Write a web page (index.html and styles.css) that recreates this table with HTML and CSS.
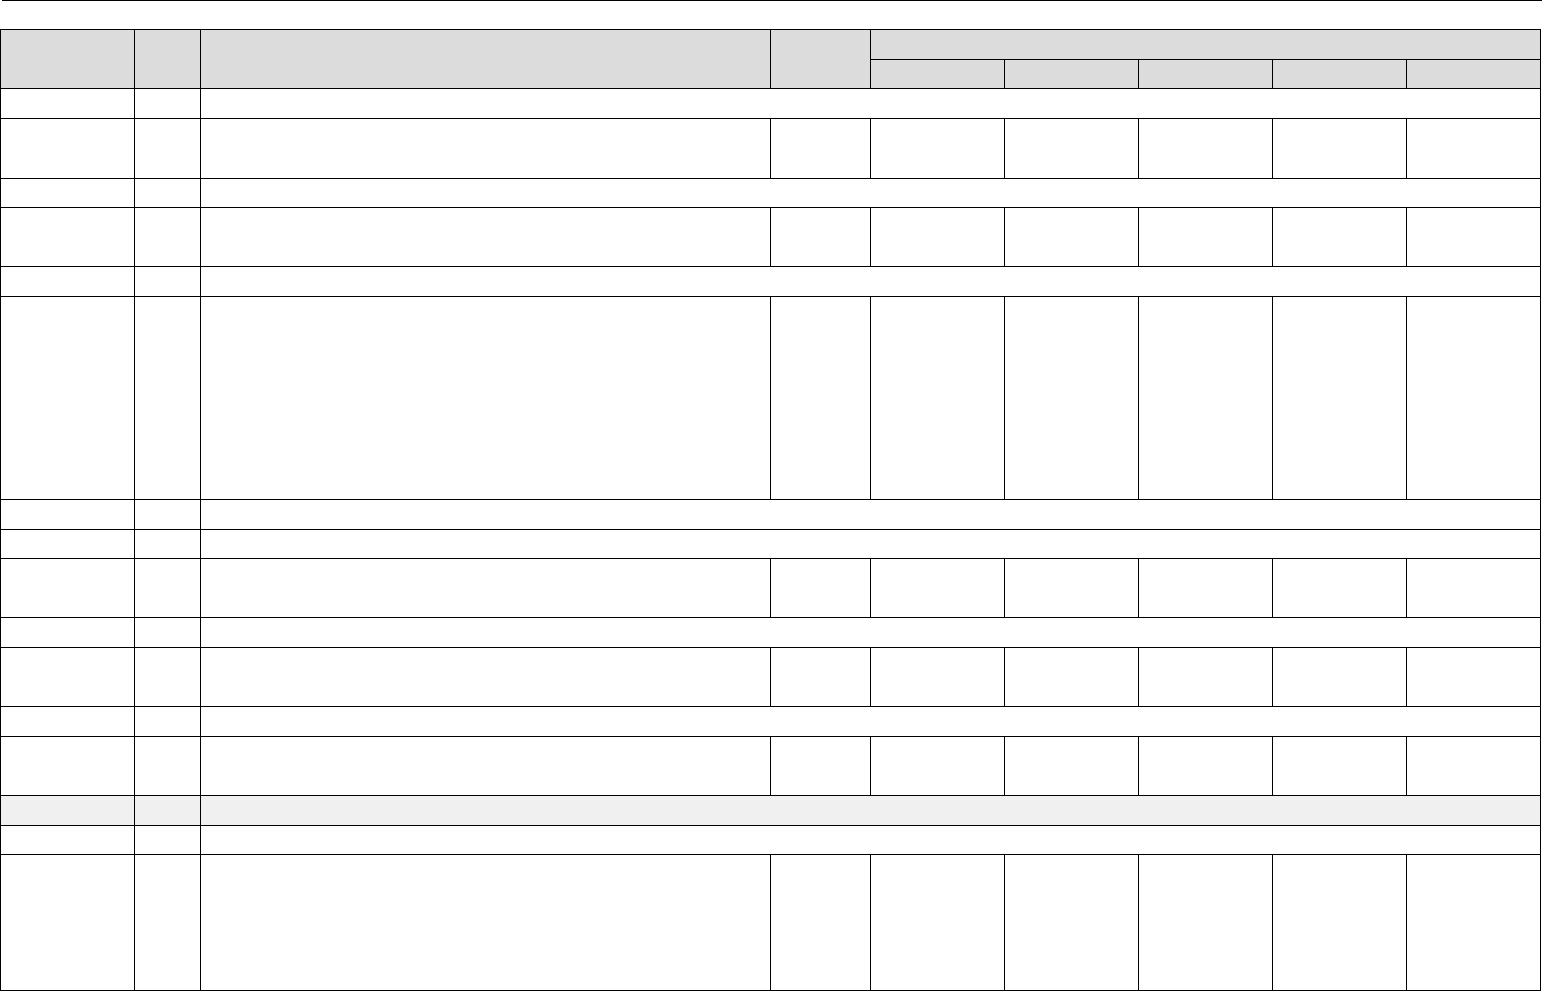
FILE: index.html
```html
<!DOCTYPE html>
<html lang="en">
<head>
<meta charset="utf-8">
<title>Table</title>
<link rel="stylesheet" href="styles.css">
</head>
<body>
<div class="topline"></div>
<table class="grid">
  <colgroup>
    <col class="c134"><col class="c66"><col class="c570"><col class="c100">
    <col class="c134"><col class="c134"><col class="c134"><col class="c134"><col class="c134">
  </colgroup>
  <thead>
    <tr class="h30">
      <th rowspan="2"></th><th rowspan="2"></th><th rowspan="2"></th><th rowspan="2"></th>
      <th colspan="5"></th>
    </tr>
    <tr class="h29">
      <th></th><th></th><th></th><th></th><th></th>
    </tr>
  </thead>
  <tbody>
    <tr class="h30"><td></td><td></td><td colspan="7"></td></tr>
    <tr class="h60"><td></td><td></td><td></td><td></td><td></td><td></td><td></td><td></td><td></td></tr>
    <tr class="h29"><td></td><td></td><td colspan="7"></td></tr>
    <tr class="h59"><td></td><td></td><td></td><td></td><td></td><td></td><td></td><td></td><td></td></tr>
    <tr class="h30"><td></td><td></td><td colspan="7"></td></tr>
    <tr class="h203"><td></td><td></td><td></td><td></td><td></td><td></td><td></td><td></td><td></td></tr>
    <tr class="h30"><td></td><td></td><td colspan="7"></td></tr>
    <tr class="h29"><td></td><td></td><td colspan="7"></td></tr>
    <tr class="h59"><td></td><td></td><td></td><td></td><td></td><td></td><td></td><td></td><td></td></tr>
    <tr class="h30"><td></td><td></td><td colspan="7"></td></tr>
    <tr class="h59"><td></td><td></td><td></td><td></td><td></td><td></td><td></td><td></td><td></td></tr>
    <tr class="h30"><td></td><td></td><td colspan="7"></td></tr>
    <tr class="h59"><td></td><td></td><td></td><td></td><td></td><td></td><td></td><td></td><td></td></tr>
    <tr class="h30 shade"><td></td><td></td><td colspan="7"></td></tr>
    <tr class="h29"><td></td><td></td><td colspan="7"></td></tr>
    <tr class="h136"><td></td><td></td><td></td><td></td><td></td><td></td><td></td><td></td><td></td></tr>
  </tbody>
</table>
</body>
</html>
```
FILE: styles.css
```css
html, body {
  margin: 0;
  padding: 0;
  background: #ffffff;
  font-family: "Liberation Sans", Arial, sans-serif;
  font-size: 13px;
}

.topline {
  height: 1px;
  margin: 0 2px 0 2px;
  background: #000000;
}

.grid {
  margin-top: 28px;
  border-collapse: collapse;
  table-layout: fixed;
  width: 1541px;
}

.grid th,
.grid td {
  border: 1px solid #000000;
  padding: 0;
}

.grid th {
  background: #dcdcdc;
}

.c134 { width: 134px; }
.c66 { width: 66px; }
.c570 { width: 570px; }
.c100 { width: 100px; }

.h29 { height: 29px; }
.h30 { height: 30px; }
.h59 { height: 59px; }
.h60 { height: 60px; }
.h203 { height: 203px; }
.h136 { height: 136px; }

.shade td {
  background: #f0f0f0;
}
```
